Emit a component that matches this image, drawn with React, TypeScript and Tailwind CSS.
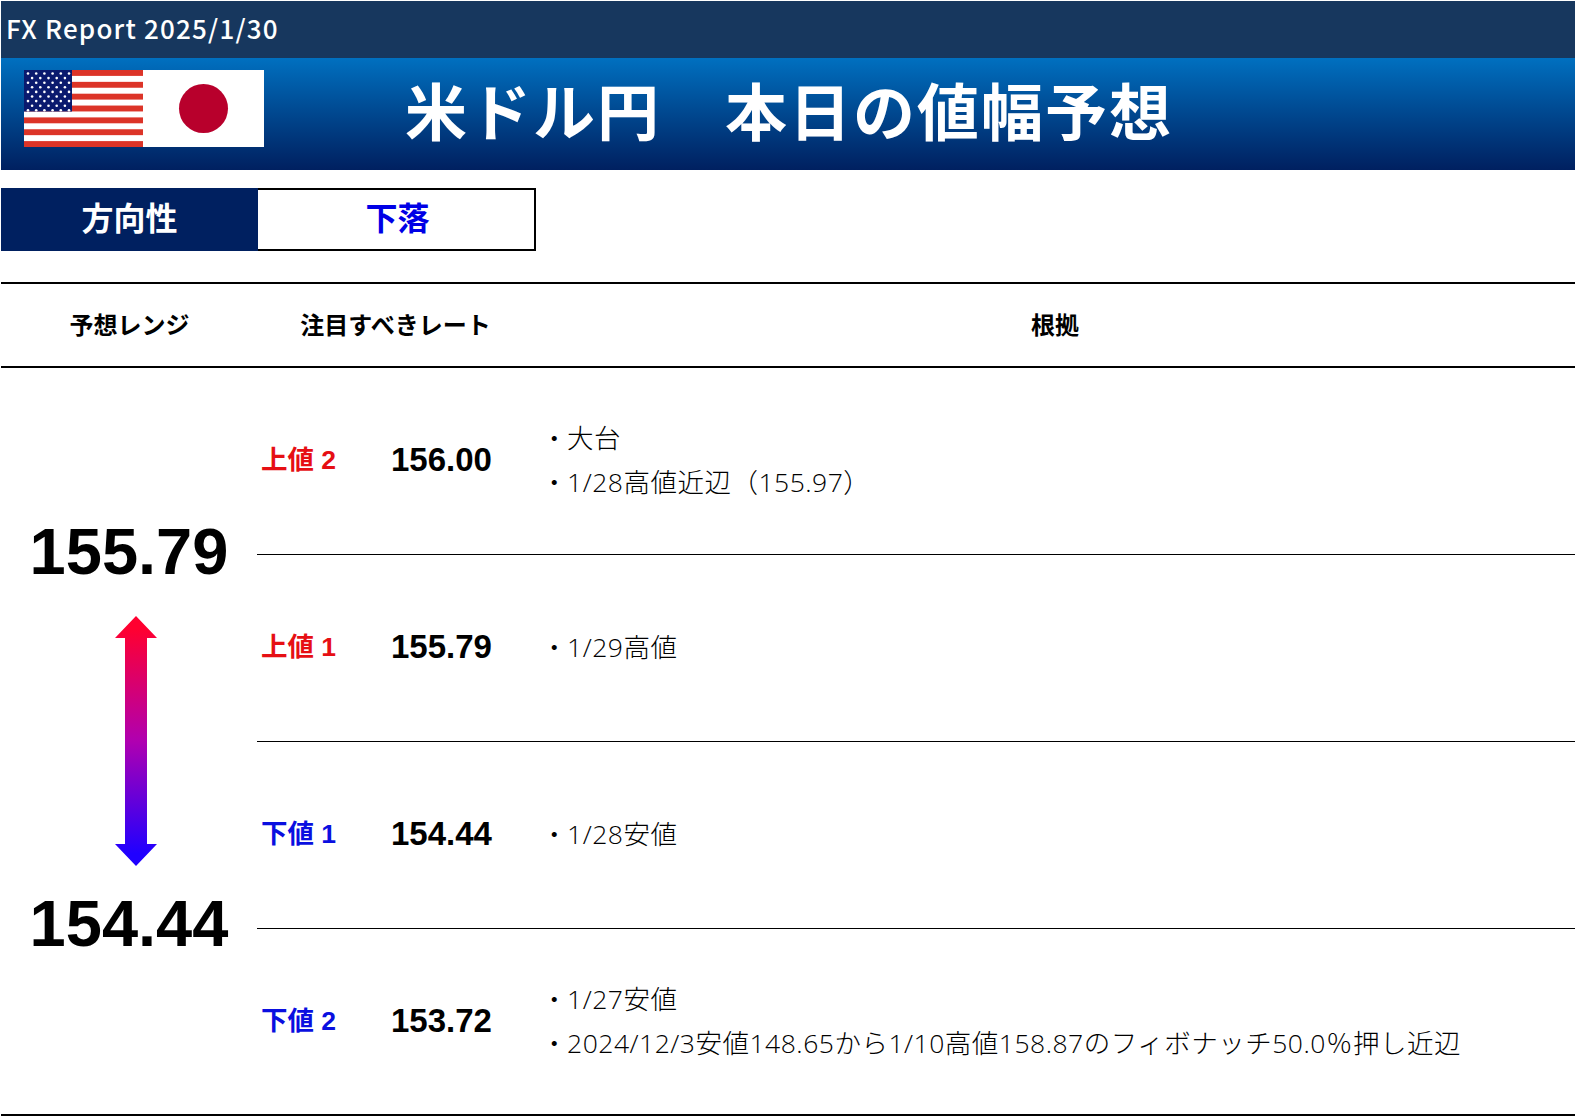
const font = "[font-family:'Liberation_Sans','Noto_Sans_CJK_JP',sans-serif]"
const jp = "[font-family:'Noto_Sans_CJK_JP',sans-serif]"
const body = "[font-family:'Open_Sans','Noto_Sans_CJK_JP',sans-serif]"

function UsFlag() {
  const stripes = [0, 1, 2, 3, 4, 5, 6]
  const stars: [number, number][] = []
  for (let r = 0; r < 9; r++) {
    const n = r % 2 === 0 ? 6 : 5
    for (let c = 0; c < n; c++) {
      stars.push([r % 2 === 0 ? 4 + c * 8.2 : 8.1 + c * 8.2, 3.5 + r * 4.6])
    }
  }
  return (
    <svg width="119" height="77" viewBox="0 0 119 77" className="block">
      <rect width="119" height="77" fill="#fff" />
      {stripes.map((i) => (
        <rect key={i} x="0" y={i * 11.85} width="119" height="5.9" fill="#dc3428" />
      ))}
      <rect width="48" height="41.5" fill="#0a1a6e" />
      {stars.map(([x, y], i) => (
        <circle key={i} cx={x} cy={y} r="1.3" fill="#fff" />
      ))}
    </svg>
  )
}

function JpFlag() {
  return (
    <svg width="121" height="77" viewBox="0 0 121 77" className="block">
      <rect width="121" height="77" fill="#fff" />
      <circle cx="60.5" cy="38.5" r="24.5" fill="#b8002c" />
    </svg>
  )
}

function RangeArrow() {
  return (
    <svg width="44" height="250" viewBox="0 0 44 250" className="block">
      <defs>
        <linearGradient id="range" x1="0" y1="0" x2="0" y2="1">
          <stop offset="0.05" stopColor="#ff0030" />
          <stop offset="0.5" stopColor="#b000b0" />
          <stop offset="0.95" stopColor="#2000ff" />
        </linearGradient>
      </defs>
      <path d="M22 0 L43 22 L33 22 L33 228 L43 228 L22 250 L1 228 L11 228 L11 22 L1 22 Z" fill="url(#range)" />
    </svg>
  )
}

const rows = [
  { label: "上値 2", color: "text-[#e60f14]", rate: "156.00", notes: ["大台", "1/28高値近辺（155.97）"] },
  { label: "上値 1", color: "text-[#e60f14]", rate: "155.79", notes: ["1/29高値"] },
  { label: "下値 1", color: "text-[#0a0fe0]", rate: "154.44", notes: ["1/28安値"] },
  { label: "下値 2", color: "text-[#0a0fe0]", rate: "153.72", notes: ["1/27安値", "2024/12/3安値148.65から1/10高値158.87のフィボナッチ50.0％押し近辺"] },
]

export default function App() {
  return (
    <div className={`${font} h-[1116px] w-[1575px] overflow-hidden bg-white pt-px pl-px text-black`}>
      {/* Header */}
      <div className={`${jp} flex h-[57px] items-center bg-[#17375e] pb-1 pl-[5px] text-[26px] font-medium tracking-[1.2px] text-white`}>
        FX Report 2025/1/30
      </div>
      <div className="flex h-[112px] bg-gradient-to-b from-[#0070c0] to-[#002060] pt-3 pl-[23px]">
        <UsFlag />
        <JpFlag />
        <h1 className={`${jp} ml-[141px] -mt-[3px] h-fit text-[62px] leading-[84px] font-bold tracking-[2px] text-white`}>
          米ドル円　本日の値幅予想
        </h1>
      </div>

      {/* Direction */}
      <div className={`${jp} mt-[18px] flex h-[63px] w-[535px] text-[32px] font-bold`}>
        <div className="flex w-[257px] items-center justify-center bg-[#002060] pb-2 text-white">方向性</div>
        <div className="flex flex-1 items-center justify-center border-y-2 border-r-2 border-black pb-2 pl-[3px] text-[#0000e6]">下落</div>
      </div>

      {/* Table head */}
      <div className={`${jp} mt-[31px] flex h-[86px] items-center border-y-2 border-black pb-[3px] text-[24px] font-bold`}>
        <div className="w-[257px] text-center">予想レンジ</div>
        <div className="w-[275px] text-center">注目すべきレート</div>
        <div className="flex-1 pl-[2px] text-center">根拠</div>
      </div>

      {/* Table body */}
      <div className="flex border-b-2 border-black">
        <div className="flex w-[256px] flex-col items-center pt-[139px] text-[65px] leading-[90px] font-bold">
          <div>155.79</div>
          <div className="mt-[19px] ml-[14px]">
            <RangeArrow />
          </div>
          <div className="mt-[13px]">154.44</div>
        </div>
        <div className="flex-1">
          {rows.map((row, i) => (
            <div key={row.label} className={`flex items-center ${i < 3 ? "h-[187px] border-b border-black" : "h-[185px]"}`}>
              <div className={`w-[134px] pl-[4px] text-[26.5px] font-bold ${row.color}`}>{row.label}</div>
              <div className="w-[150px] pb-0.5 text-[33px] font-bold">{row.rate}</div>
              <div className={`${body} flex flex-col gap-[6px] pb-0.5 text-[26.5px] leading-[38px] font-light tracking-[0.5px]`}>
                {row.notes.map((n) => (
                  <div key={n} className="flex">
                    <span className="w-[26px]">・</span>
                    <span>{n}</span>
                  </div>
                ))}
              </div>
            </div>
          ))}
        </div>
      </div>
    </div>
  )
}
